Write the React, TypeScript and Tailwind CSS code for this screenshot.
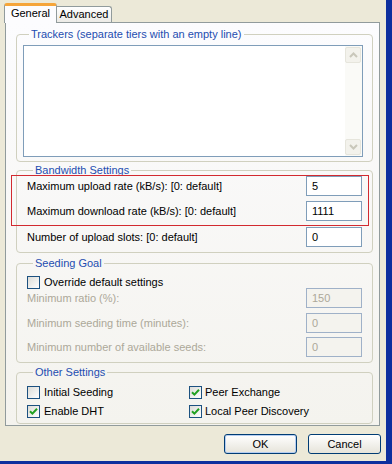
const font = "font-['Liberation_Sans',Arial,sans-serif]";

function Check({ checked }: { checked?: boolean }) {
  return (
    <span className="w-[13px] h-[13px] shrink-0 border border-[#1C5180] bg-gradient-to-br from-[#DCDCD7] to-white flex items-center justify-center">
      {checked && (
        <svg width="9" height="9" viewBox="0 0 9 9">
          <path d="M1 4.2 L3.4 6.6 L8 1.8" fill="none" stroke="#21A121" strokeWidth="2" />
        </svg>
      )}
    </span>
  );
}

function Field({ value, disabled }: { value: string; disabled?: boolean }) {
  return (
    <div
      className={
        disabled
          ? 'w-[56px] h-[20px] border border-[#9FB1C8] bg-[#F4F3EE] pl-[5px] flex items-center text-[#ACA899]'
          : 'w-[56px] h-[20px] border border-[#7F9DB9] bg-white pl-[5px] flex items-center'
      }
    >
      {value}
    </div>
  );
}

function Group({ title, className, children }: { title: string; className?: string; children: React.ReactNode }) {
  return (
    <fieldset className={`w-[357px] border border-[#D0D0BF] rounded-[4px] ${className ?? ''}`}>
      <legend className="ml-[6px] px-[2px] leading-[13px] text-[#1E4DB0]">{title}</legend>
      {children}
    </fieldset>
  );
}

function Arrow({ up }: { up?: boolean }) {
  return (
    <div className="w-[16px] h-[16px] rounded-[2px] border border-[#E6E5DC] bg-[#F3F2EC] flex items-center justify-center">
      <svg width="9" height="6" viewBox="0 0 9 6">
        <path d={up ? 'M1 5 L4.5 1.5 L8 5' : 'M1 1 L4.5 4.5 L8 1'} fill="none" stroke="#C9C7BA" strokeWidth="2" />
      </svg>
    </div>
  );
}

export default function App() {
  const seedRows = [
    { label: 'Minimum ratio (%):', value: '150', mt: 'mt-[-1px]' },
    { label: 'Minimum seeding time (minutes):', value: '0', mt: 'mt-[5px]' },
    { label: 'Minimum number of available seeds:', value: '0', mt: 'mt-[4px]' },
  ];

  return (
    <div className={`w-[392px] h-[464px] bg-[#ECE9D8] border-r-[6px] border-b-[3px] border-[#0D2F9E] pl-[4px] pt-[3px] flex flex-col text-[11px] text-black ${font}`}>
      {/* tabs */}
      <div className="flex items-end h-[20px] relative z-10 -mb-px">
        <div className="w-[53px] h-[20px] bg-[#FCFCFE] border-x border-[#919B9C] border-t-[3px] border-t-[#F5A53A] rounded-t-[3px] flex items-center justify-center pb-[2px]">
          General
        </div>
        <div className="w-[55px] h-[16px] bg-gradient-to-b from-white to-[#ECEBE6] border-t border-r border-[#919B9C] rounded-tr-[3px] flex items-center justify-center mb-px">
          Advanced
        </div>
      </div>

      {/* panel */}
      <div className="ml-[1px] w-[375px] h-[404px] border border-[#919B9C] bg-gradient-to-b from-[#FCFCFE] to-[#F4F3EE] pl-[10px] pt-[5px]">
        <Group title="Trackers (separate tiers with an empty line)" className="pl-[6px] pb-[4px]">
          <div className="mt-[4px] w-[340px] h-[112px] border border-[#7F9DB9] bg-white flex justify-end">
            <div className="w-[17px] bg-[#FAFAF7] flex flex-col justify-between py-[1px]">
              <Arrow up />
              <Arrow />
            </div>
          </div>
        </Group>

        <div className="relative mt-[2px]">
          <Group title="Bandwidth Settings" className="px-[10px] pb-[5px]">
            <div className="mt-[-1px] flex items-center justify-between h-[20px]">
              <span>Maximum upload rate (kB/s): [0: default]</span>
              <Field value="5" />
            </div>
            <div className="mt-[5px] flex items-center justify-between h-[20px]">
              <span>Maximum download rate (kB/s): [0: default]</span>
              <Field value="1111" />
            </div>
            <div className="mt-[6px] flex items-center justify-between h-[20px]">
              <span>Number of upload slots: [0: default]</span>
              <Field value="0" />
            </div>
          </Group>
          <div className="absolute left-[-5px] top-[11px] w-[358px] h-[51px] border border-[#D22A30] pointer-events-none" />
        </div>

        <Group title="Seeding Goal" className="mt-[4px] px-[10px] pb-[5px]">
          <div className="mt-[6px] flex items-center gap-[4px] h-[13px]">
            <Check />
            <span>Override default settings</span>
          </div>
          {seedRows.map((r) => (
            <div key={r.label} className={`${r.mt} flex items-center justify-between h-[20px]`}>
              <span className="text-[#ACA899]">{r.label}</span>
              <Field value={r.value} disabled />
            </div>
          ))}
        </Group>

        <Group title="Other Settings" className="mt-[3px] px-[10px] pb-[5px]">
          <div className="mt-[7px] grid grid-cols-[162px_1fr] gap-y-[6px]">
            <div className="flex items-center gap-[4px] h-[13px]">
              <Check />
              <span>Initial Seeding</span>
            </div>
            <div className="flex items-center gap-[3px] h-[13px]">
              <Check checked />
              <span>Peer Exchange</span>
            </div>
            <div className="flex items-center gap-[4px] h-[13px]">
              <Check checked />
              <span>Enable DHT</span>
            </div>
            <div className="flex items-center gap-[3px] h-[13px]">
              <Check checked />
              <span>Local Peer Discovery</span>
            </div>
          </div>
        </Group>
      </div>

      {/* buttons */}
      <div className="mt-[8px] mr-[5px] flex justify-end gap-[11px]">
        <button className="w-[73px] h-[20px] rounded-[3px] border border-[#003C74] bg-gradient-to-b from-white to-[#E6E4DA] shadow-[inset_0_0_0_1px_#B5CDF0]">
          OK
        </button>
        <button className="w-[73px] h-[20px] rounded-[3px] border border-[#003C74] bg-gradient-to-b from-white to-[#E6E4DA]">
          Cancel
        </button>
      </div>
    </div>
  );
}
